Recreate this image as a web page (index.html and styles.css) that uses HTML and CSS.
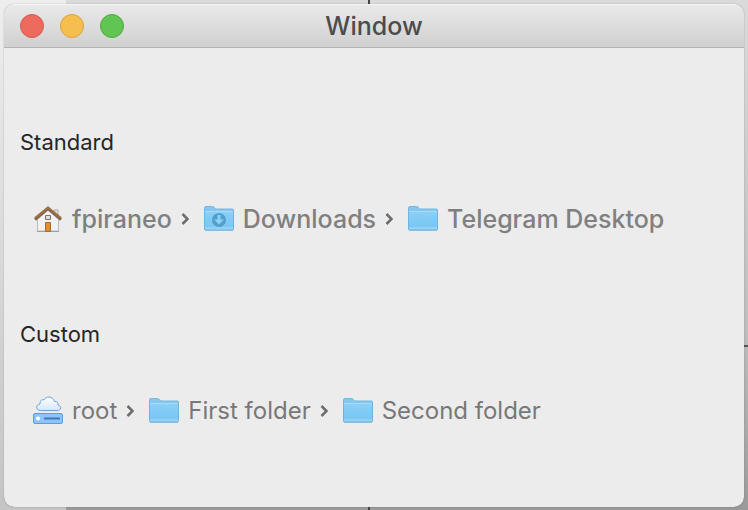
FILE: index.html
```html
<!DOCTYPE html>
<html lang="en">
<head>
  <meta charset="UTF-8">
  <meta name="viewport" content="width=device-width, initial-scale=1.0">
  <title>Window</title>
  <link rel="stylesheet" href="styles.css">
</head>
<body>

  <!-- shared icons -->
  <svg class="defs" width="0" height="0" aria-hidden="true">
    <defs>
      <linearGradient id="folder-fill" x1="0" y1="0" x2="0" y2="1">
        <stop offset="0" stop-color="#8bd0f7"/>
        <stop offset="0.8" stop-color="#7ac6f5"/>
        <stop offset="1" stop-color="#91d2f7"/>
      </linearGradient>
      <linearGradient id="cloud-fill" x1="0" y1="0" x2="0" y2="1">
        <stop offset="0" stop-color="#ffffff"/>
        <stop offset="1" stop-color="#d3e8fb"/>
      </linearGradient>
      <symbol id="folder" viewBox="0 0 32 32">
        <path d="M1.5 25V5Q1.5 3.5 3 3.5H9.5Q10.5 3.5 11.5 4.5L12.5 5.5Q13 6 14 6H29.5Q30.5 6 30.5 7V25Z" fill="#85c7ed" stroke="#76b8de"/>
        <path d="M1.5 8.5H30.5V26Q30.5 27 29.5 27H2.5Q1.5 27 1.5 26Z" fill="url(#folder-fill)" stroke="#6cb5e1"/>
        <path d="M2 8.5H30" stroke="#a6dcfa"/>
        <path d="M2 25H30" stroke="#a0d9f8"/>
        <path d="M2 27.5H30" stroke="#85a9bd" stroke-opacity="0.6"/>
      </symbol>
      <symbol id="chevron" viewBox="0 0 8 12">
        <path d="M1.5 1L6.5 6L1.5 11" fill="none" stroke="#6c6c6c" stroke-width="2.5"/>
      </symbol>
    </defs>
  </svg>

  <div class="window">
    <header class="titlebar">
      <div class="controls">
        <button class="control close" type="button" aria-label="Close"></button>
        <button class="control minimize" type="button" aria-label="Minimize"></button>
        <button class="control zoom" type="button" aria-label="Zoom"></button>
      </div>
      <h1 class="title">Window</h1>
    </header>

    <main class="content">
      <section class="group">
        <h2 class="label" id="standard">Standard</h2>
        <nav class="path path-standard" aria-labelledby="standard">
          <a class="item" href="#">
            <svg class="icon" viewBox="0 0 32 32" aria-hidden="true">
              <path d="M22 7H26V14H22Z" fill="#e2e2df" stroke="#aaa9a3"/>
              <path d="M5.5 15L16 6L26.5 15V28H5.5Z" fill="#f2f1ef" stroke="#bcbbb8"/>
              <path d="M5 28.5H27" stroke="#a2a19e"/>
              <path d="M3 16.5L16 5.5L29 16.5" fill="none" stroke="#76685a" stroke-width="3"/>
              <path d="M3 15L16 4.5L29 15" fill="none" stroke="#a3703f" stroke-width="2"/>
              <path d="M13.5 12.5H18.5V16.5H13.5Z" fill="#d5e1e4" stroke="#8c7255"/>
              <path d="M13.5 19.5H18.5V28.5H13.5Z" fill="#ee8b25" stroke="#8f704c"/>
            </svg>
            <span>fpiraneo</span>
          </a>
          <svg class="chevron" aria-hidden="true"><use href="#chevron"/></svg>
          <a class="item" href="#">
            <svg class="icon" viewBox="0 0 32 32" aria-hidden="true">
              <use href="#folder"/>
              <circle cx="16" cy="17" r="7" fill="#519fcc"/>
              <path d="M14.5 12H17.5V16.5H21L16 21.5L11 16.5H14.5Z" fill="#8dd0f5"/>
            </svg>
            <span>Downloads</span>
          </a>
          <svg class="chevron" aria-hidden="true"><use href="#chevron"/></svg>
          <a class="item" href="#">
            <svg class="icon" aria-hidden="true"><use href="#folder"/></svg>
            <span>Telegram Desktop</span>
          </a>
        </nav>
      </section>

      <section class="group">
        <h2 class="label" id="custom">Custom</h2>
        <nav class="path" aria-labelledby="custom">
          <a class="item" href="#">
            <svg class="icon" viewBox="0 0 32 32" aria-hidden="true">
              <path d="M8.5 15.5C3.5 15.5 3.5 9.5 8 9C8 5.5 10 4 12 5C14 0.5 21 1 22.5 6.5C25 6 26.5 8 26 10C30 11 29.5 15.5 25 15.5Z" fill="url(#cloud-fill)" stroke="#6f9fd6"/>
              <rect x="1.5" y="18.5" width="29" height="10" rx="1.5" fill="#8dc3f8" stroke="#5e9ce0"/>
              <circle cx="6" cy="23.5" r="2" fill="#ffffff"/>
              <path d="M12 23.5H28" stroke="#4177b5" stroke-width="2"/>
            </svg>
            <span>root</span>
          </a>
          <svg class="chevron" aria-hidden="true"><use href="#chevron"/></svg>
          <a class="item" href="#">
            <svg class="icon" aria-hidden="true"><use href="#folder"/></svg>
            <span>First folder</span>
          </a>
          <svg class="chevron" aria-hidden="true"><use href="#chevron"/></svg>
          <a class="item" href="#">
            <svg class="icon" aria-hidden="true"><use href="#folder"/></svg>
            <span>Second folder</span>
          </a>
        </nav>
      </section>
    </main>
  </div>

</body>
</html>
```
FILE: styles.css
```css
* {
  box-sizing: border-box;
}

body {
  display: flex;
  min-height: 100vh;
  margin: 0;
  padding: 4px;
  font-family: Inter, "Liberation Sans", sans-serif;
  background:
    linear-gradient(#444, #444) 368px 0 / 2px 100% no-repeat,
    linear-gradient(#555, #555) 100% 345px / 6px 2px no-repeat,
    linear-gradient(#eeeeee, #c4c4c4) 0 0 / 66px 100% no-repeat,
    linear-gradient(#dadada, #bdbdbd 65%, #999999);
}

.defs {
  position: absolute;
}

.window {
  flex: 1;
  border-radius: 10px;
  overflow: hidden;
  background: #ececec;
  box-shadow: 0 0 1px rgba(0, 0, 0, 0.6);
}

.titlebar {
  display: grid;
  grid-template-columns: 1fr auto 1fr;
  align-items: center;
  height: 44px;
  padding: 0 16px;
  background: linear-gradient(#e9e9e9, #d0d0d0);
  border-top: 1px solid #f6f6f6;
  border-bottom: 1px solid #b4b4b4;
}

.controls {
  display: flex;
  gap: 16px;
}

.control {
  width: 24px;
  height: 24px;
  padding: 0;
  border: 1px solid;
  border-radius: 50%;
}

.close {
  background: #ed6a5e;
  border-color: #d55951;
}

.minimize {
  background: #f6be4f;
  border-color: #d8a23f;
}

.zoom {
  background: #61c554;
  border-color: #51a73e;
}

.title {
  margin: 0;
  font-size: 25px;
  font-weight: 500;
  line-height: 32px;
  color: #4c4c4c;
}

.content {
  display: flex;
  flex-direction: column;
  gap: 85px;
  padding: 80px 16px;
}

.label {
  margin: 0;
  font-size: 22px;
  font-weight: 400;
  line-height: 28px;
  color: #262626;
}

.path {
  display: flex;
  align-items: center;
  margin-top: 47px;
  padding-left: 12px;
  font-size: 24px;
  color: #787878;
}

.path-standard {
  font-size: 25px;
  font-weight: 500;
  color: #808080;
}

.item {
  display: flex;
  align-items: center;
  gap: 8px;
  line-height: 32px;
  white-space: nowrap;
  color: inherit;
  text-decoration: none;
}

.icon {
  width: 32px;
  height: 32px;
}

.chevron {
  width: 8px;
  height: 12px;
  margin: 0 14px 0 9px;
}
```
